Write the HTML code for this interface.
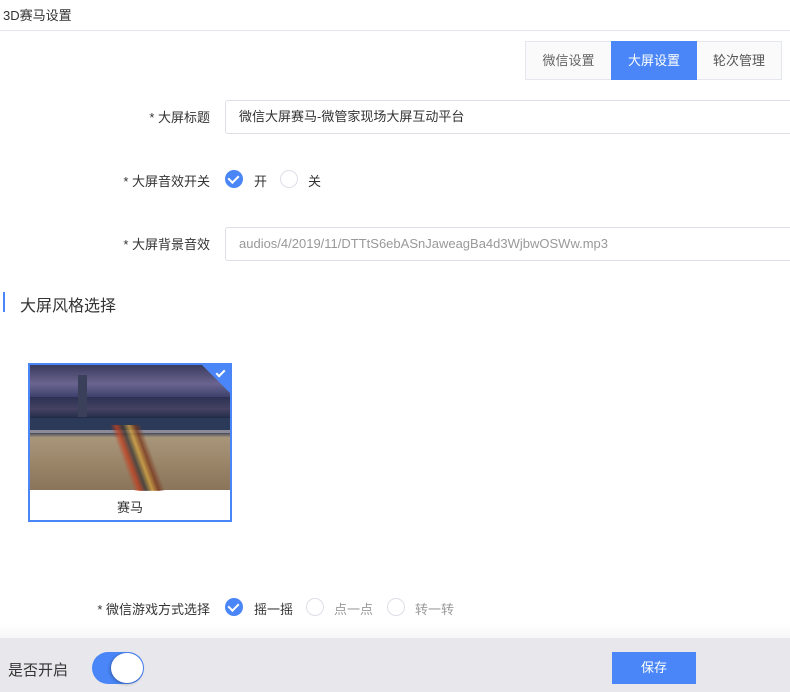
<!DOCTYPE html>
<html><head><meta charset="utf-8"><style>
*{box-sizing:border-box;margin:0;padding:0}
body{width:790px;height:692px;overflow:hidden;background:#fff;font-family:"Liberation Sans","Noto Sans CJK SC",sans-serif;color:#333;font-size:13px;position:relative}
.abs{position:absolute}
.lbl{position:absolute;text-align:right;font-size:13px;color:#333;width:200px}
.inp{position:absolute;left:225px;width:580px;height:34px;border:1px solid #dcdfe6;border-radius:3px;padding-left:13px;line-height:32px;font-size:13px}
.chk{position:absolute;width:18px;height:18px;border-radius:50%;background:#4a86f7}
.chk:after{content:"";position:absolute;left:5px;top:3px;width:5px;height:8px;border:solid #fff;border-width:0 2px 2px 0;transform:rotate(45deg)}
.rad{position:absolute;width:18px;height:18px;border-radius:50%;border:1px solid #dcdfe6;background:#fff}
</style></head><body>
<div class="abs" style="left:3px;top:5px;font-size:13px;color:#333">3D赛马设置</div>
<div class="abs" style="left:0;top:30px;width:790px;height:1px;background:#e4e7ed"></div>

<div class="abs" style="left:525px;top:41px;width:257px;height:39px;border:1px solid #e4e7ed;background:#fafafa"></div>
<div class="abs" style="left:526px;top:42px;width:85px;height:37px;line-height:38px;text-align:center;color:#666">微信设置</div>
<div class="abs" style="left:611px;top:41px;width:86px;height:39px;line-height:40px;text-align:center;color:#fff;background:#4a86f7">大屏设置</div>
<div class="abs" style="left:697px;top:42px;width:84px;height:37px;line-height:38px;text-align:center;color:#555">轮次管理</div>

<div class="lbl" style="left:10px;top:107px">* 大屏标题</div>
<div class="inp" style="top:100px;color:#333">微信大屏赛马-微管家现场大屏互动平台</div>

<div class="lbl" style="left:10px;top:171px">* 大屏音效开关</div>
<div class="chk" style="left:225px;top:170px"></div>
<div class="abs" style="left:254px;top:171px">开</div>
<div class="rad" style="left:280px;top:170px"></div>
<div class="abs" style="left:308px;top:171px">关</div>

<div class="lbl" style="left:10px;top:234px">* 大屏背景音效</div>
<div class="inp" style="top:227px;color:#999">audios/4/2019/11/DTTtS6ebASnJaweagBa4d3WjbwOSWw.mp3</div>

<div class="abs" style="left:3px;top:292px;width:2px;height:20px;background:#4a86f7"></div>
<div class="abs" style="left:20px;top:292px;font-size:16px;color:#333">大屏风格选择</div>

<div class="abs" style="left:28px;top:363px;width:204px;height:159px;border:2px solid #4a86f7;background:#fff;overflow:hidden">
 <div class="abs" style="left:0;top:0;width:200px;height:125px;background:linear-gradient(#3a3a5c 0%,#6a6590 15%,#3a3f6a 26%,#1d2445 36%,#2a3352 50%,#3a4258 54%,#a8967a 58%,#9a8468 80%,#8a745a 100%)"></div>
 <div class="abs" style="left:0;top:32px;width:200px;height:20px;background:linear-gradient(#2a2f50,#4a4565 60%,#25304a);opacity:.9"></div>
 <div class="abs" style="left:48px;top:10px;width:9px;height:42px;background:#3a3f5a"></div>
 <div class="abs" style="left:0;top:53px;width:200px;height:12px;background:#2a3a58"></div>
 <div class="abs" style="left:0;top:65px;width:200px;height:3px;background:#8a8a98"></div>
 <div class="abs" style="left:80px;top:60px;width:55px;height:66px;background:linear-gradient(70deg,transparent 30%,#c04020 38%,#3a3a3a 46%,#d0a040 54%,#7a3a20 62%,transparent 70%);opacity:.8"></div>
 <div class="abs" style="left:172px;top:0;width:0;height:0;border-top:28px solid #4a86f7;border-left:28px solid transparent"></div>
 <div class="abs" style="left:188px;top:3px;width:5px;height:9px;border:solid #fff;border-width:0 2px 2px 0;transform:rotate(45deg)"></div>
 <div class="abs" style="left:0;top:132px;width:200px;text-align:center;font-size:13px;color:#333">赛马</div>
</div>

<div class="lbl" style="left:10px;top:599px">* 微信游戏方式选择</div>
<div class="chk" style="left:225px;top:598px"></div>
<div class="abs" style="left:254px;top:599px">摇一摇</div>
<div class="rad" style="left:306px;top:598px"></div>
<div class="abs" style="left:334px;top:599px;color:#999">点一点</div>
<div class="rad" style="left:387px;top:598px"></div>
<div class="abs" style="left:415px;top:599px;color:#999">转一转</div>

<div class="abs" style="left:0;top:625px;width:790px;height:20px;background:linear-gradient(#fff,#f1f1f4)"></div>
<div class="abs" style="left:0;top:638px;width:790px;height:54px;background:#e8e8ec"></div>
<div class="abs" style="left:8px;top:659px;font-size:15px;color:#333">是否开启</div>
<div class="abs" style="left:92px;top:652px;width:52px;height:32px;border-radius:16px;background:#4a86f7"></div>
<div class="abs" style="left:111px;top:653px;width:32px;height:30px;border-radius:50%;background:#fff;box-shadow:-1px 1px 3px rgba(0,0,0,.3)"></div>
<div class="abs" style="left:612px;top:652px;width:84px;height:32px;background:#4a86f7;color:#fff;text-align:center;line-height:32px;font-size:13px">保存</div>
</body></html>
